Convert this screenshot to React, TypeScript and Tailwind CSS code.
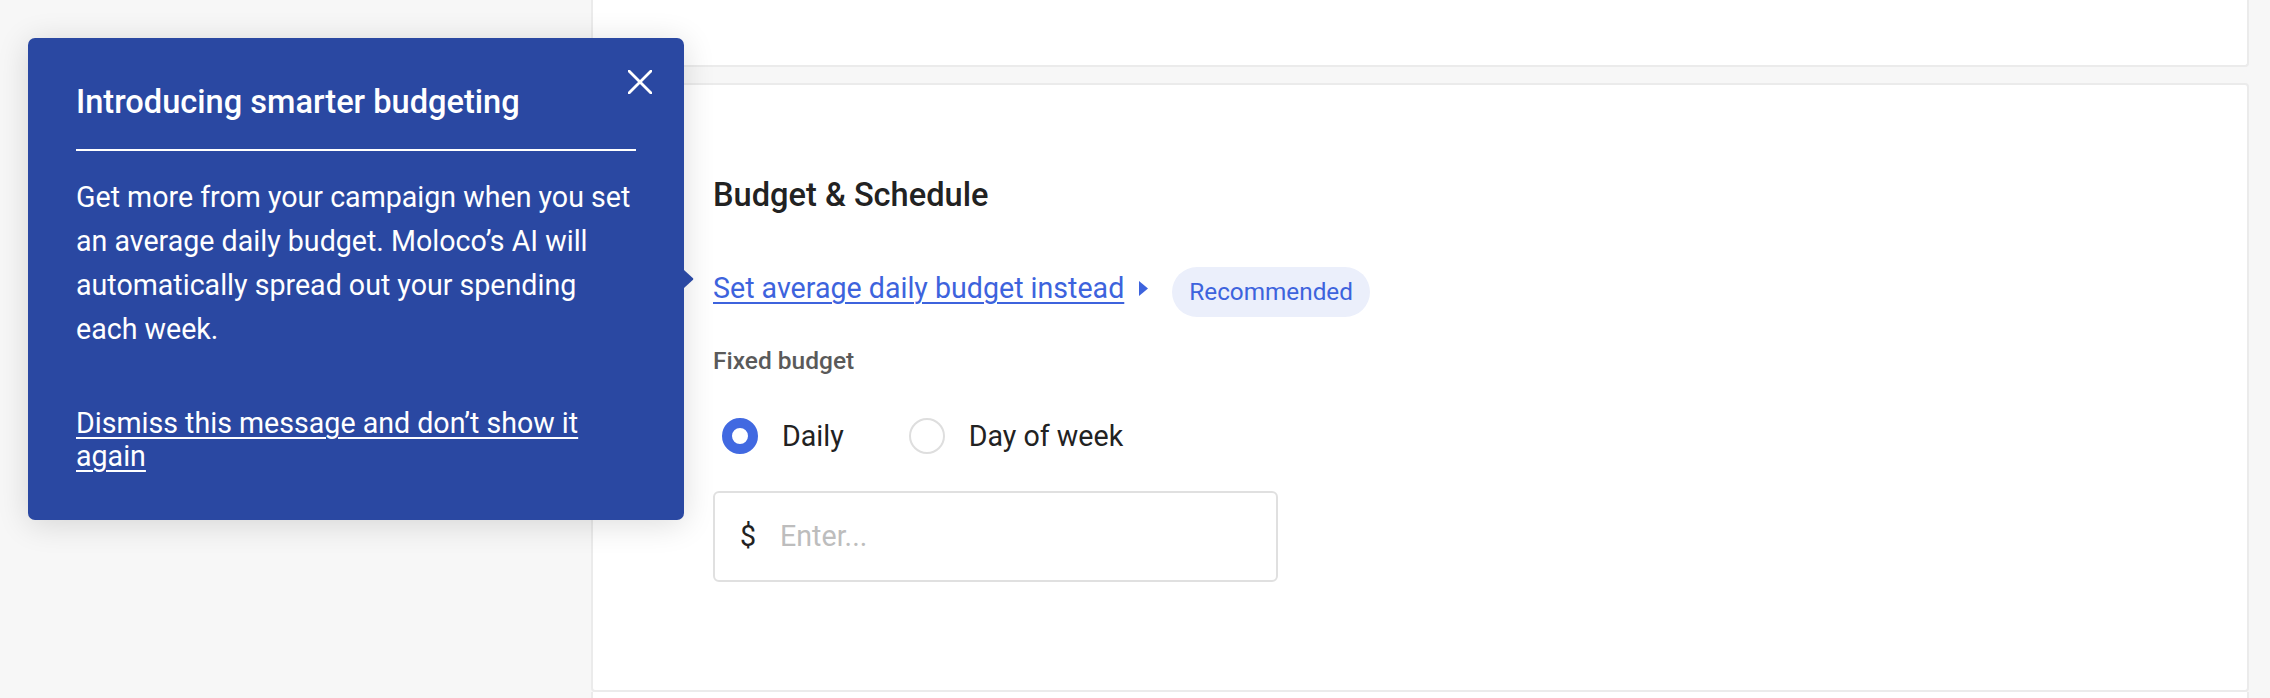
import React from "react";

function CloseIcon() {
  return (
    <svg viewBox="0 0 24 24" className="h-[24px] w-[24px]" fill="none">
      <path d="M1 1L23 23M23 1L1 23" stroke="#ffffff" strokeWidth="2.8" strokeLinecap="square" />
    </svg>
  );
}

function IntroPopover() {
  return (
    <div className="absolute left-[28px] top-[38px] w-[656px] rounded-[7px] bg-[#2a48a2] px-[48px] pb-[47px] pt-[44px] text-white shadow-[0_4px_32px_rgba(0,0,0,0.14)]">
      <button className="absolute right-[32px] top-[32px] flex items-center justify-center">
        <CloseIcon />
      </button>

      <h3 className="text-[32.6px] font-medium leading-[40px]">Introducing smarter budgeting</h3>
      <div className="mt-[27px] h-[2px] w-full bg-white" />

      <p className="mt-[24px] text-[28.6px] leading-[44px]">
        Get more from your campaign when you set an average daily budget. Moloco’s AI will
        automatically spread out your spending each week.
      </p>

      <a className="mt-[56px] block text-[28.6px] leading-[33px] underline decoration-2 underline-offset-[4px]">
        Dismiss this message and don’t show it again
      </a>

      {/* pointer toward the budget link */}
      <svg viewBox="0 0 10 18" className="absolute left-full top-[232px] h-[18px] w-[10px]">
        <path d="M0 0L9 8.2Q9.8 9 9 9.8L0 18Z" fill="#2a48a2" />
      </svg>
    </div>
  );
}

function RadioOption({ label, checked }: { label: string; checked?: boolean }) {
  return (
    <label className="flex items-center gap-[24px] px-[9px]">
      {checked ? (
        <span className="h-[36px] w-[36px] rounded-full border-[10px] border-[#4169e1] bg-white" />
      ) : (
        <span className="h-[36px] w-[36px] rounded-full border-2 border-[#dedede] bg-white" />
      )}
      <span className="text-[28.6px] leading-[36px] text-[#222222]">{label}</span>
    </label>
  );
}

export default function App() {
  return (
    <div className="relative h-[698px] w-[2270px] overflow-hidden bg-[#f7f7f7] font-['Roboto',sans-serif]">
      <div className="flex pr-[21px]">
        <div className="w-[591px] shrink-0" />

        <div className="flex-1">
          <div className="h-[67px] rounded-b-[4px] border-x-2 border-b-2 border-[#ebebeb] bg-white" />

          <section className="mt-[16px] rounded-[4px] border-2 border-[#ebebeb] bg-white pb-[108px] pl-[120px] pt-[90px]">
            <h2 className="text-[32.6px] font-medium leading-[40px] text-[#222222]">Budget &amp; Schedule</h2>

            <div className="mt-[52px] flex items-start">
              <a className="mt-[3px] text-[28.6px] leading-[36px] text-[#3d63dd] underline decoration-[1.5px] underline-offset-[4px]">
                Set average daily budget instead
              </a>
              <svg viewBox="0 0 9 15" className="ml-[15px] mt-[14px] h-[15px] w-[9px]">
                <path d="M0 0L9 7.5L0 15Z" fill="#3d63dd" />
              </svg>
              <span className="ml-[24px] flex h-[50px] items-center rounded-full bg-[#ebeffb] px-[17px] text-[24.3px] leading-[50px] text-[#3d63dd]">
                Recommended
              </span>
            </div>

            <div className="mt-[28px] text-[24.5px] font-medium leading-[32px] text-[#5a5a5a]">Fixed budget</div>

            <div className="mt-[41px] flex items-center gap-[47px]">
              <RadioOption label="Daily" checked />
              <RadioOption label="Day of week" />
            </div>

            <div className="mt-[37px] flex h-[91px] w-[565px] items-center gap-[24px] rounded-[6px] border-2 border-[#e0e0e0] bg-white px-[25px]">
              <span className="text-[28.6px] text-[#222222]">$</span>
              <input
                placeholder="Enter..."
                className="flex-1 bg-transparent text-[28.6px] text-[#222222] outline-none placeholder:text-[#bdbdbd]"
              />
            </div>
          </section>

          <div className="h-[40px] border-x-2 border-[#ebebeb] bg-white" />
        </div>
      </div>

      <IntroPopover />
    </div>
  );
}
